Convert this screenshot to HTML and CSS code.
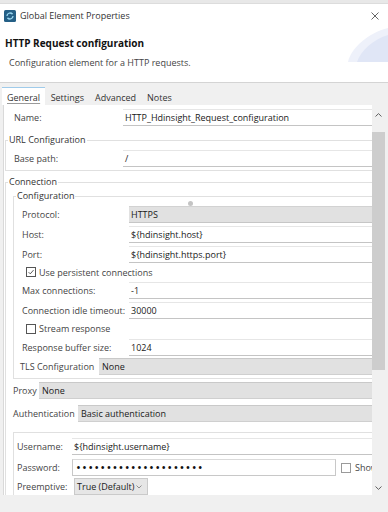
FILE: index.html
```html
<!DOCTYPE html>
<html>
<head>
<meta charset="utf-8">
<title>Global Element Properties</title>
<link rel="stylesheet" href="styles.css">
</head>
<body>
<div class="topstrip"></div>
<div class="titlebar">
  <svg class="app-icon" viewBox="0 0 12 12">
    <rect x="0" y="0" width="12" height="12" rx="1.5" fill="#245f86"/>
    <path d="M3 6a3 3 0 0 1 5.2-2" fill="none" stroke="#9ad7f1" stroke-width="1.3"/>
    <path d="M9 6a3 3 0 0 1-5.2 2" fill="none" stroke="#9ad7f1" stroke-width="1.3"/>
    <path d="M7.2 2.6l1.6 0.6-0.4 1.6z" fill="#9ad7f1"/>
    <path d="M4.8 9.4l-1.6-0.6 0.4-1.6z" fill="#9ad7f1"/>
  </svg>
  <span class="title-text">Global Element Properties</span>
  <svg class="close" viewBox="0 0 8 8"><path d="M0.5 0.5L7.5 7.5M7.5 0.5L0.5 7.5" stroke="#555" stroke-width="0.9"/></svg>
</div>
<div class="header">
  <h1 class="head-title">HTTP Request configuration</h1>
  <p class="desc">Configuration element for a HTTP requests.</p>
  <svg class="deco" viewBox="0 0 40 34">
    <path d="M0 34C3 20 20 5 40 0V34Z" fill="#eef1fa"/>
    <path d="M9 34C13 22 26 11 40 7V34Z" fill="#e0e6f6"/>
  </svg>
</div>
<div class="tabs">
  <div class="tab active"><span class="focus">General</span></div>
  <div class="tab">Settings</div>
  <div class="tab">Advanced</div>
  <div class="tab">Notes</div>
</div>
<div class="main">
  <div class="panel">
    <div class="row name-row">
      <span class="label">Name:</span>
      <div class="field">HTTP_Hdinsight_Request_configuration</div>
    </div>
    <div class="group url-group">
      <div class="legend">URL Configuration</div>
      <div class="row base-row">
        <span class="label">Base path:</span>
        <div class="field">/</div>
      </div>
    </div>
    <div class="group conn-group">
      <div class="legend">Connection</div>
      <div class="group config-group">
        <div class="legend">Configuration</div>
        <span class="sash-dot"></span>
        <div class="row cfg-row mt3">
          <span class="label">Protocol:</span>
          <div class="field gray">HTTPS</div>
        </div>
        <div class="row cfg-row mt3">
          <span class="label">Host:</span>
          <div class="field">${hdinsight.host}</div>
        </div>
        <div class="row cfg-row mt3">
          <span class="label">Port:</span>
          <div class="field">${hdinsight.https.port}</div>
        </div>
        <div class="check-row h18">
          <span class="checkbox checked">
            <svg viewBox="0 0 10 10"><path d="M2 5.2L4.1 7.3L8.2 2.6" fill="none" stroke="#333" stroke-width="1"/></svg>
          </span>
          <span class="label">Use persistent connections</span>
        </div>
        <div class="row cfg-row mt1">
          <span class="label">Max connections:</span>
          <div class="field">-1</div>
        </div>
        <div class="row cfg-row mt3">
          <span class="label">Connection idle timeout:</span>
          <div class="field">30000</div>
        </div>
        <div class="check-row h19">
          <span class="checkbox"></span>
          <span class="label">Stream response</span>
        </div>
        <div class="row cfg-row mt1">
          <span class="label">Response buffer size:</span>
          <div class="field">1024</div>
        </div>
        <div class="flex-row tls-row mt2">
          <span class="label tls-label">TLS Configuration</span>
          <div class="combo">None</div>
        </div>
      </div>
      <div class="flex-row outer-row mt3">
        <span class="label proxy-label">Proxy</span>
        <div class="combo">None</div>
      </div>
      <div class="flex-row outer-row mt6">
        <span class="label auth-label">Authentication</span>
        <div class="combo">Basic authentication</div>
      </div>
      <div class="auth-box">
        <div class="row auth-row">
          <span class="label">Username:</span>
          <div class="field">${hdinsight.username}</div>
        </div>
        <div class="flex-row pass-row">
          <span class="label auth-col">Password:</span>
          <div class="field boxed dots">•••••••••••••••••••••</div>
          <span class="checkbox light"></span>
          <span class="label show-text">Show password</span>
        </div>
        <div class="flex-row pre-row">
          <span class="label pre-col">Preemptive:</span>
          <div class="select">
            <span>True (Default)</span>
            <svg class="chev" viewBox="0 0 6 4"><path d="M0.5 0.5L3 3L5.5 0.5" fill="none" stroke="#777" stroke-width="0.8"/></svg>
          </div>
        </div>
      </div>
    </div>
  </div>
  <div class="scrollbar">
    <svg class="arrow up" viewBox="0 0 7 4"><path d="M0.5 3.5L3.5 0.6L6.5 3.5" fill="none" stroke="#606060" stroke-width="1"/></svg>
    <div class="thumb"></div>
    <svg class="arrow down" viewBox="0 0 7 4"><path d="M0.5 0.5L3.5 3.4L6.5 0.5" fill="none" stroke="#606060" stroke-width="1"/></svg>
  </div>
</div>
<div class="footer"></div>
</body>
</html>
```
FILE: styles.css
```css
* { box-sizing: border-box; }
html, body { margin: 0; padding: 0; }
body {
  width: 388px;
  height: 512px;
  overflow: hidden;
  background: #f0f0f0;
  font-family: "Open Sans", "Noto Sans", sans-serif;
  font-size: 9px;
  color: #333;
}

.topstrip {
  height: 4px;
  background: #e8e8e8;
  border-bottom: 1px solid #dcdcdc;
}

.titlebar {
  height: 24px;
  background: #fff;
  display: flex;
  align-items: center;
  padding-left: 4px;
}
.app-icon { width: 12px; height: 12px; margin-right: 4px; flex: none; }
.title-text { flex: 1; line-height: 12px; color: #333; }
.close { width: 8px; height: 8px; margin-right: 9px; flex: none; }

.header {
  position: relative;
  height: 55px;
  background: #fff;
  border-bottom: 1px solid #d4d4d4;
  padding-top: 8px;
}
.head-title {
  margin: 0 0 0 5px;
  font-size: 10px;
  line-height: 14px;
  font-weight: 700;
  color: #111;
}
.desc {
  margin: 6px 0 0 9px;
  line-height: 14px;
  color: #444;
}
.deco { position: absolute; right: 0; top: 0; width: 40px; height: 34px; }

.tabs {
  height: 22px;
  display: flex;
  align-items: flex-end;
  padding-left: 2px;
}
.tab {
  height: 18px;
  line-height: 16px;
  padding: 2px 5.5px 0;
  border-top: 1px solid transparent;
  color: #333;
}
.tab.active {
  background: #fff;
  border-top: 1px solid #9fcbea;
  padding: 2px 5px 0;
}
.focus { text-decoration: underline; text-decoration-color: #9a9a9a; text-underline-offset: 2px; }

.main { display: flex; height: 390px; }
.panel {
  flex: 0 0 369px;
  margin-left: 3px;
  background: #fff;
  border-left: 1px solid #d9d9d9;
  overflow: hidden;
  padding-top: 4px;
}
.scrollbar {
  flex: 0 0 13px;
  background: #f0f0f0;
  display: flex;
  flex-direction: column;
  align-items: center;
}
.arrow { width: 7px; height: 4px; flex: none; }
.arrow.up { margin-top: 8px; }
.thumb { width: 13px; height: 238px; background: #cdcdcd; margin-top: 15px; flex: none; }
.arrow.down { margin-top: 116px; }

.footer { height: 17px; background: #f0f0f0; }

.label { color: #444; line-height: 17px; white-space: nowrap; }
.row { display: grid; align-items: center; height: 17px; }
.flex-row { display: flex; align-items: center; height: 17px; }
.mt1 { margin-top: 1px; }
.mt2 { margin-top: 2px; }
.mt3 { margin-top: 3px; }
.mt6 { margin-top: 6px; }

.field {
  height: 17px;
  background: #fff;
  border-top: 1px solid #e6e6e6;
  border-bottom: 1px solid #c4c4c4;
  padding-left: 2px;
  line-height: 15px;
  color: #1a1a1a;
  white-space: nowrap;
  overflow: hidden;
}
.field.gray { background: #e1e1e1; border-top-color: #d2d2d2; border-bottom-color: #c6c6c6; }
.combo {
  flex: 1;
  height: 17px;
  background: #e1e1e1;
  border-top: 1px solid #c9c9c9;
  border-bottom: 1px solid #cfcfcf;
  padding-left: 3px;
  line-height: 15px;
  color: #1a1a1a;
  white-space: nowrap;
}

.name-row { grid-template-columns: 109px 1fr; padding-left: 10px; }

.group {
  border: 1px solid #e0e0e0;
  border-right: none;
}
.legend {
  width: max-content;
  margin: -8px 0 0 2px;
  padding: 0 1px;
  background: #fff;
  line-height: 14px;
  color: #333;
}
.url-group { margin: 14px 0 0 1px; padding-bottom: 3px; }
.base-row { grid-template-columns: 109px 1fr; padding-left: 8px; margin-top: 3px; }

.conn-group { margin: 11px 0 0 1px; border-bottom: none; }
.config-group { position: relative; margin: 7px 0 0 7px; padding-bottom: 3px; }
.sash-dot {
  position: absolute;
  left: 174px;
  top: 4px;
  width: 5px;
  height: 5px;
  border-radius: 50%;
  background: #c4c4c4;
}
.cfg-row { grid-template-columns: 107px 1fr; padding-left: 8px; }

.check-row { display: flex; align-items: center; gap: 3px; padding-left: 12px; }
.h18 { height: 18px; }
.h19 { height: 19px; }
.checkbox {
  width: 10px;
  height: 10px;
  flex: none;
  background: #fff;
  border: 1px solid #555;
  display: flex;
}
.checkbox svg { width: 8px; height: 8px; }
.checkbox.light { border-color: #9a9a9a; }

.tls-row { padding-left: 6px; }
.tls-label { width: 79px; flex: none; }
.outer-row { padding-left: 7px; }
.proxy-label { width: 26px; flex: none; }
.auth-label { width: 65px; flex: none; }

.auth-box {
  margin: 10px 0 0 7px;
  border-top: 1px solid #e0e0e0;
  border-left: 1px solid #e0e0e0;
  padding-top: 5px;
}
.auth-row { grid-template-columns: 55px 1fr; padding-left: 3px; }
.pass-row { padding-left: 3px; margin-top: 4px; }
.auth-col { width: 55px; flex: none; }
.field.boxed {
  width: 264px;
  flex: none;
  border: 1px solid #c8c8c8;
  border-top-color: #dadada;
}
.dots { font-size: 13px; letter-spacing: 1.2px; padding-left: 3px; color: #111; }
.pass-row .checkbox { margin-left: 5px; }
.show-text { margin-left: 4px; }

.pre-row { padding-left: 3px; margin-top: 2px; }
.pre-col { width: 57px; flex: none; }
.select {
  width: 74px;
  height: 17px;
  flex: none;
  display: flex;
  align-items: center;
  justify-content: space-between;
  background: #e6e6e6;
  border: 1px solid #cacaca;
  padding: 0 5px 0 2px;
  line-height: 15px;
  color: #1a1a1a;
  white-space: nowrap;
}
.chev { width: 6px; height: 4px; }
```
